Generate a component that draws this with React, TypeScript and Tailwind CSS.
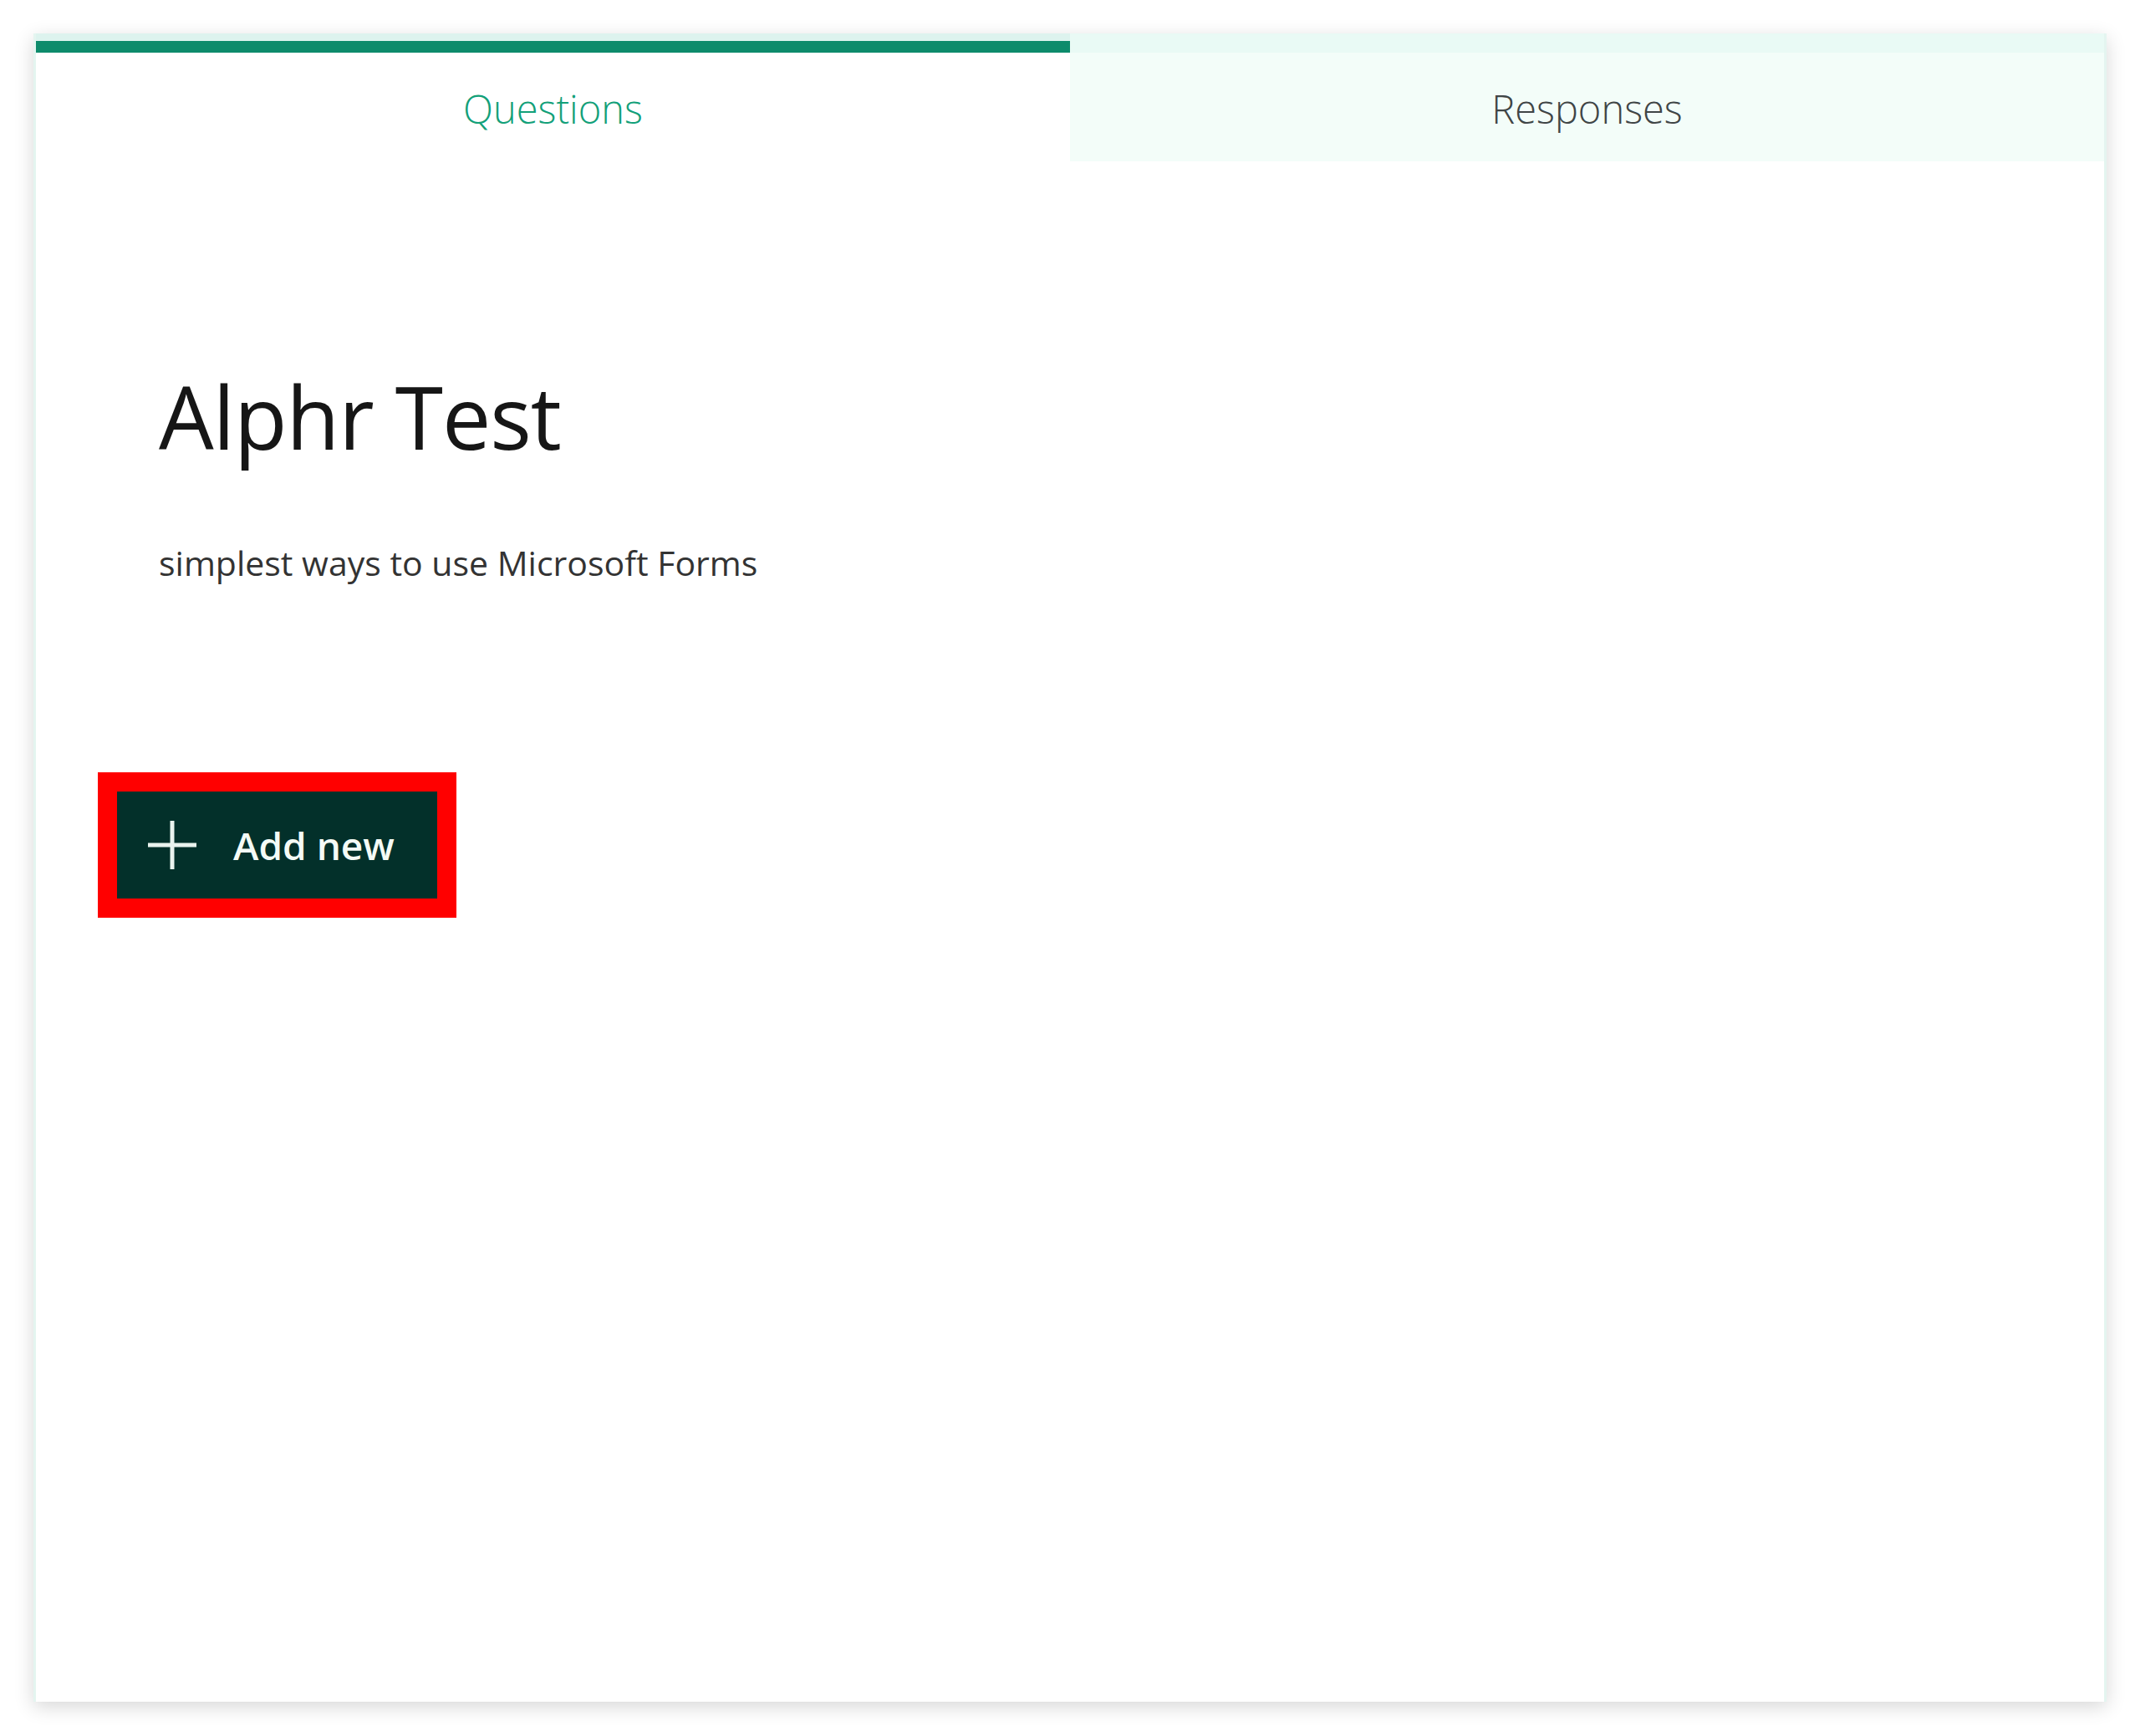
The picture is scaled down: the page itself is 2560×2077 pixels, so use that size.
import React from "react";

export default function App() {
  return (
    <div className="w-[2560px] h-[2077px] bg-white pt-[40px] pl-[40px]" style={{ fontFamily: '"Open Sans", "Noto Sans", sans-serif' }}>
      <div className="w-[2480px] h-[1996px] bg-white border-x-[3px] border-[#e4f5f0] shadow-[0_6px_22px_rgba(0,0,0,0.16)] flex flex-col">
        {/* Tabs */}
        <div className="flex h-[153px]">
          <div className="flex-1 flex flex-col bg-white">
            <div className="h-[9px] bg-[#ddf3ee]" />
            <div className="h-[14px] bg-[#0d8b6b]" />
            <div className="flex-1 flex items-center justify-center pt-[4px]">
              <span className="text-[47px] font-light text-[#12a079]">Questions</span>
            </div>
          </div>
          <div className="flex-1 flex flex-col bg-[#f3fdf9]">
            <div className="h-[23px] bg-[#e9faf5]" />
            <div className="flex-1 flex items-center justify-center pt-[4px]">
              <span className="text-[47px] font-light text-[#3f4546]">Responses</span>
            </div>
          </div>
        </div>
        {/* Content */}
        <div className="pl-[147px] pt-[253px]">
          <h1 className="text-[104px] leading-none font-normal text-[#161616] tracking-[-0.01em]">Alphr Test</h1>
          <p className="mt-[103px] text-[41px] leading-none text-[#333333]">simplest ways to use Microsoft Forms</p>
        </div>
        <div className="pl-[74px] pt-[230px]">
          <div className="inline-flex border-[23px] border-[#ff0000]">
            <div className="w-[383px] h-[128px] bg-[#03302a] flex items-center pl-[37px]">
              <svg width="58" height="58" viewBox="0 0 58 58" className="shrink-0">
                <path d="M29 0 V58 M0 29 H58" stroke="#eaf3ee" strokeWidth="5" fill="none" />
              </svg>
              <span className="ml-[44px] text-[46px] font-semibold text-[#f4fbf6]">Add new</span>
            </div>
          </div>
        </div>
      </div>
    </div>
  );
}
